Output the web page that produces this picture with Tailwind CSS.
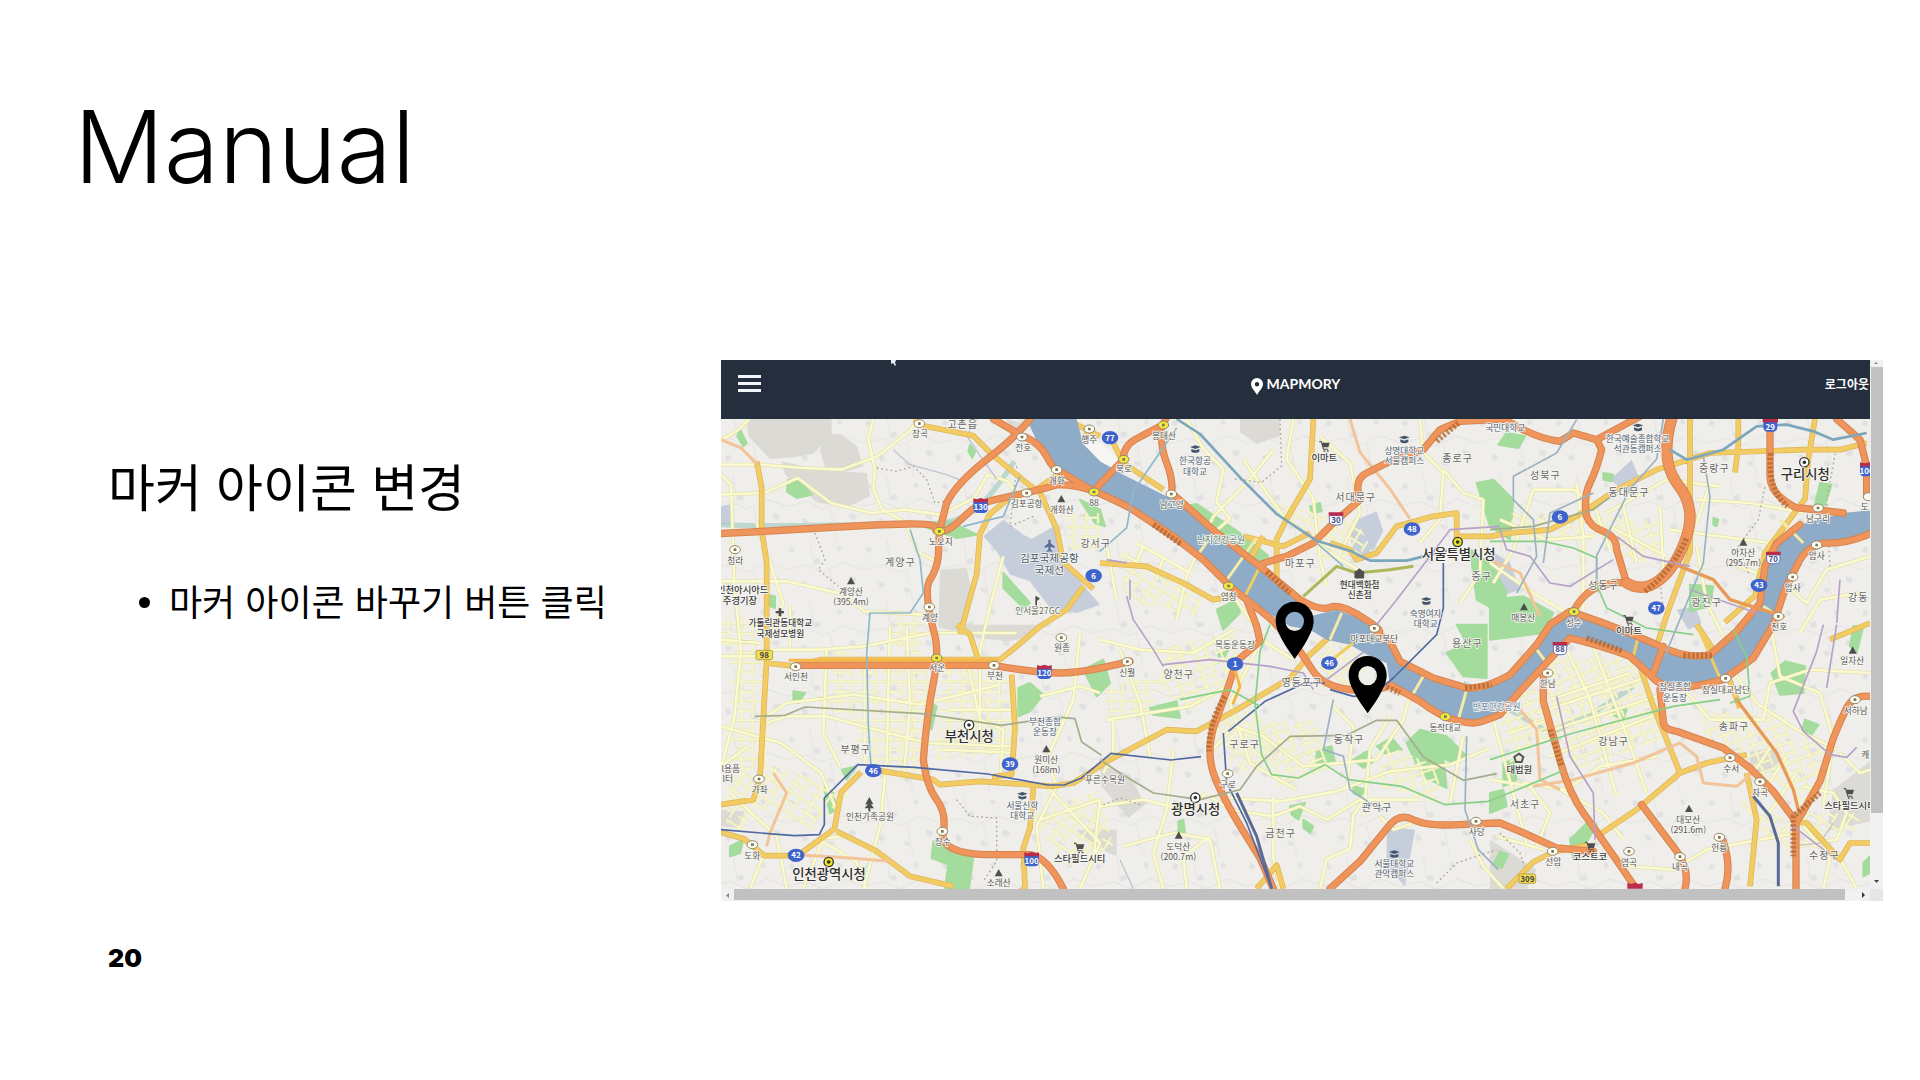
<!DOCTYPE html>
<html lang="ko">
<head>
<meta charset="utf-8">
<meta name="viewport" content="width=device-width, initial-scale=1">
<title>Manual</title>
<script src="https://cdn.jsdelivr.net/npm/@tailwindcss/browser@4"></script>
</head>
<body class="bg-white text-black">
<main class="flex min-h-screen flex-col">
  <h1 class="px-[74px] pt-[83px] font-['Inter',sans-serif] text-[100px] leading-[128px] font-light">Manual</h1>

  <div class="mt-[149px] flex items-start">
    <section class="w-[721px] max-w-[38%] shrink-0 pt-[87px] pl-[108px] font-['Noto_Sans_CJK_KR',sans-serif]">
      <h2 class="text-[51px] leading-[76px] font-normal whitespace-nowrap">마커 아이콘 변경</h2>
      <ul class="mt-[49px] ml-[31px] text-[36px] leading-[56px]">
        <li class="flex items-center gap-[19px] whitespace-nowrap"><span class="mt-[4px] size-[11px] rounded-full bg-black"></span>마커 아이콘 바꾸기 버튼 클릭</li>
      </ul>
    </section>

    <section class="mr-[37px] grid min-w-0 flex-1 grid-cols-[1fr_13px]">
      <div class="relative min-w-0">
        <header class="grid h-[59px] grid-cols-3 items-start bg-[#242e3c] text-white">
          <button type="button" aria-label="메뉴" class="mt-[15px] ml-[17px] flex w-[23px] flex-col gap-[4px]">
            <span class="h-[3px] w-full bg-[#f1f5fa]"></span><span class="h-[3px] w-full bg-[#f1f5fa]"></span><span class="h-[3px] w-full bg-[#f1f5fa]"></span>
          </button>
          <a href="#" class="mt-[13px] flex items-center justify-center gap-[4px] font-['Lato',sans-serif] text-[14px] leading-[22px] font-bold">
            <svg class="mt-[5px] h-[17px] w-[12px]" viewBox="0 0 24 34" fill="currentColor" aria-hidden="true"><path fill-rule="evenodd" d="M12 0a12 12 0 0 0-12 12c0 8 8 14 12 22 4-8 12-14 12-22A12 12 0 0 0 12 0Zm0 8a4.500 4.500 0 1 1 0 9 4.500 4.500 0 0 1 0-9Z"/></svg>MAPMORY</a>
          <button type="button" class="mt-[14px] mr-px justify-self-end font-['Noto_Sans_CJK_KR',sans-serif] text-[12px] leading-[20px] font-bold">로그아웃</button>
        </header>
        <svg class="absolute top-0 left-[170px] h-[6px] w-[6px]" viewBox="0 0 6 6" aria-hidden="true"><path d="M0 0h5L4 3l1 2-1 1-2-3-2 1z" fill="#e9edf2"/></svg>

        <svg class="block w-full bg-[#efeeea] font-['Noto_Sans_CJK_KR',sans-serif]" viewBox="33 208 3447 1409" role="img" aria-label="서울 지도">
          <defs>
            <pattern id="specks" width="230" height="190" patternUnits="userSpaceOnUse">
              <path d="M12 20l14 8-8 12-12-6zM80 60l18-6 4 16-16 4zM150 22l10-4 8 12-12 6zM190 110l20 6-6 16-18-8zM44 130l12-6 10 14-14 8zM120 150l8-8 14 10-10 10z" fill="#d5d7dc" opacity=".55"/>
              <path d="M0 90l60-14 50 22 60-30 60 22M70 0l12 76M150 190l-20-95" fill="none" stroke="#e4e3e1" stroke-width="3"/>
            </pattern>
            <pattern id="streets" width="74" height="58" patternUnits="userSpaceOnUse">
              <path d="M0 10h74M0 40h50M20 0v58M54 10v48" fill="none" stroke="#dfdda4" stroke-width="7"/>
              <path d="M0 10h74M0 40h50M20 0v58M54 10v48" fill="none" stroke="#faf9cf" stroke-width="5"/>
            </pattern>
            <pattern id="streetsTilted" href="#streets" patternTransform="rotate(-20)"/>
            <pattern id="streetsSlanted" href="#streets" patternTransform="rotate(32)"/>
            <path id="arterials" d="M140 335l15 80 0 125 15 100 0 290-20 350-20 70-97 15M640 228l150 30 60 60 110 90 30 20 50 110 20 100 90 80M1140 238l-40 60-60 80-60 40-80 25-60 50-30 60-10 120-50 180M610 208h15M1170 260l-80-40M1210 280l30 60 120 80M170 940l90 10 70-20h540l50-40 70-60 80-50 50-70M905 975l10 160-10 140-50 5 0 15M740 825l40 30 25 75M490 1260l180 30 20 15 120-10 220 15 60-10 110-70 170-90 90 5 130-70 150-90 60-70 110-100M33 1448l70 20 60 50h100l110-80 20-110 60-60M380 1445l120 60 100 75 130 30M970 1315l-10 120-20 60 5 120-20 15M1170 640l140 10 110 50 90 50 60-10 20-60 70-120M1810 208l-10 180-70 120-30 60 0 120M1600 560l120 30 80-40M1860 580l60 20 20 30 60-20 60-80 110-30 70-10v70h100l60-10 120-10 80-40 120-80 120-60 160-50 280-10h110l80-20M3315 208l-20 120-10 120-120 160-30 130-90 80M2940 208v400l-60 160-40 120M3085 208v80l-10 80M2780 920l50 150 80 200-130 110-120 80M2910 1270l80-30 120-25M2390 1617l80-80 60-30 100-20M2960 825l40 60 60 110 30 80M3110 1270l30 140-20 200M3480 1480l-60 0-30 50-100-110-40-5M3360 870l120-50M1640 1617l60-70 20 70"/>
            <path id="expressways" d="M25 552C280 540 450 525 590 523S650 545 690 545 760 495 800 470 930 440 1040 405Q1110 405 1170 432T1260 475L1390 560 1480 630 1555 705Q1590 735 1610 750T1690 815L1770 905 1810 965Q1840 1010 1920 1020T2040 1005L2130 1055Q2190 1100 2230 1110T2290 1120 2370 1095L2430 1025 2500 950 2580 865Q2680 890 2760 920L2820 975Q2850 1012 2900 1013T3040 990L3130 925 3190 825 3225 720 3270 630Q3290 595 3340 580 3410 585 3490 548M960 208Q920 260 830 330T710 460L688 545 685 620Q680 660 660 690T670 840Q690 900 670 1000T640 1230Q650 1310 680 1350T700 1450 830 1515H960Q1010 1520 1060 1617M850 208L930 255Q990 280 1010 320T1050 365L1150 425 1240 330Q1240 290 1275 270T1360 225L1370 200M1355 228Q1350 290 1370 340T1385 430L1520 550 1650 650 1770 750Q1830 785 1860 773T1960 805 2000 850L2040 875 2070 935 2170 985 2270 1015Q2320 1020 2400 975L2480 885 2520 825 2580 785 2680 820 2770 855 2840 885Q2930 930 3000 915L3080 845 3150 760 3165 650 3200 580 3270 525M260 947H850Q980 970 1050 970T1260 935M1610 750L1640 830 1650 875 1580 935 1550 1025 1510 1135Q1490 1210 1510 1270T1600 1445L1650 1525 1690 1617M1650 645Q1690 630 1730 620L1810 580 1870 520 1950 450Q1930 390 1970 370L2030 340 2140 300 2190 240 2250 215 2380 208 2440 240Q2500 270 2550 275L2590 250 2660 270 2675 300Q2660 360 2640 400T2630 500Q2640 530 2680 545T2720 600L2750 700M2660 270L2790 200M2750 700Q2640 690 2590 785M3180 200V380Q3180 420 3220 450T3270 475L3400 490M3380 208L3450 270 3470 350V440M1860 1617L1950 1535 2040 1425Q2070 1390 2110 1410T2250 1425 2370 1420L2430 1445 2540 1495 2650 1505M2500 970V1055L2540 1195Q2570 1320 2620 1390T2770 1605M2850 1020L2860 1115Q2860 1140 2900 1145L3040 1195 3120 1255 3190 1325 3250 1405 3258 1425V1617M3480 1040Q3430 1035 3410 1075T3370 1165L3330 1295 3280 1385 3255 1425M2795 1365L2900 1505Q2940 1560 2925 1617M3040 1475Q3065 1550 3045 1617M2860 890L2830 970"/>
          </defs>

          <!-- ground: hills, airfield, campuses -->
          <path fill="url(#specks)" d="M33 208h3447v1409H33z"/>
          <g fill="#dcdad4">
            <path d="M110 208h255v45l-55 60-60 10-70 5-65-68zM345 250l50 5 45 35 20 60-50 15-65-12-15-50zM215 335l90 20 95 10 70 5 10 70-65 30-90-10-100-85zM690 660l80-5 20 90-45 100-60-10zM750 825h260l-60 40-60 10-90-10zM1590 208h120v50l-70 25-50-35zM1170 1245l90 30 45 90-50 40-80-95zM3370 1320l110-85v180l-130 30zM3120 1205l80-10 10 40-60 50-30-30zM1100 1440h120v80l-70-30zM2340 1470l140 90-30 57h-110zM890 208l70 20-60 40zM33 1380l70 5-20 50-50-5z"/>
          </g>
          <g fill="#c6cedb">
            <path d="M820 560l60-50 60 45 90 45 140 165-70 25-80-15-60-80-60-20-40-70zM960 570l80-45 20 90-70 10zM33 470l35-8v65H33zM1940 510l60-25 20 60-40 75-50-10-10-60zM2030 1430l85 10-30 170-55-60zM2700 390l65-60 25 60-40 40zM2340 600l60 40 30 80-60 20zM2900 780l55-10 20 50-40 20z"/>
            <path d="M1060 260l110 20 60 50-20 20-90-30z" fill="#f7f6f3"/>
          </g>

          <!-- parks -->
          <g fill="#a3dc9c" stroke="#a3dc9c" stroke-width="6" stroke-linejoin="round">
            <path d="M235 390l35 5 35 40-45 10-30-20zM90 240l20 40-10 10-18-30zM780 285l15 20-8 20-12-20zM1060 345l70 25 40 65-45-20zM610 520l110-5 80 40-60 10zM165 735l30 5v35l-28-10zM1110 450l60 30 15 50-30-10zM880 670l80 90-20 15-60-60zM1320 525l80-50 60-12 120 80 95 75-20 35-70-10-140-90-90-20zM2300 400l50-10 60 60-10 120-60-40zM2280 600l70 50 40 80-20 60-70-40zM2390 250l55 10-20 35-60-10zM2340 750l100-10 90 50-30 60-160 20zM2940 705l70 5-10 60-60 15zM3330 400l35 5-20 60-35 20zM2240 825h90v160l-70-5-50-70 60-30zM2090 1180l40-40 80 20 60 60-40 20-30-15 10 90-60-30-30-40zM1820 1200l45-10 10 50-55 10zM1930 1230l40-25 20 30-30 20zM2000 1190l45-25 30 35-50 10zM1320 1075l80-20 10 50-80-10zM925 1015l35-15 40 35-40 50-35 15zM1120 960l60-30 20 70-40 40zM250 1025l35 5-20 30-15-10zM670 1475l50 15 70 30-15 110-70-15 10-70-50-20zM340 1310l30 20 10 50-20 10zM395 1260l45-10-30 40zM1740 1370l45-10-20 50-20-15zM1780 1410l30 20-10 20-20-15zM1930 1310l40 10-20 20-20-10zM2580 1470l60-60 20 15-40 70-30 30zM2710 1070l40 10-10 30-35-15zM2340 1330l40-10 10 50-50 20zM2380 1240l30-10 10 60-40 20zM3185 970l40-35 60 15-5 80-70 5zM3285 1110l40 15-20 30-30-10zM3430 830h30l-20 80-20-20zM60 1490l40-20-10 40-30 10zM1405 1415l15-5 5 40-20 10zM660 1060l20 10-15 70-10-20zM2350 1545l20-40 25 10-20 40zM3460 1540l20-20v50l-20 10zM1530 900l30-10-15 30-20 0zM1520 780l60-30 10 40-50 50zM2680 370l30 5-5 20-25-5zM3010 505l15 5-5 20-10-5zM1800 470l30-10 5 25-30 5z"/>
          </g>
          <path d="M33 525c200 10 380-5 550 0s220-20 330-190M2260 1000l260 150 130-60 120-80" fill="none" stroke="#abcfc3" stroke-width="16" opacity=".7"/>

          <!-- dense street grids -->
          <path fill="url(#streets)" d="M350 900l320 40-30 330-180-30-40-140-80-20zM700 940l220 60v210l-240 20zM60 890h110v370H60zM33 800h120v90H33zM555 770l90 30-10 120-90-30zM1180 1010l180-30-40 100-120 40zM1060 490h110v110h-90z"/>
          <path fill="url(#streetsTilted)" d="M1370 890l200-40 40 130-180 110-80-90zM2500 930l260-10 90 250-250 90-60-110zM1650 1120l170-10 40 150-160 50zM2350 1040l120-40 60 170-130 70zM2980 1080l250 20 60 230-150-40-160-120zM2690 500l180 20-40 130-130-40zM3240 1180l100-30-10 160-60 60zM2020 1180l180 80-20 100-180-50z"/>
          <path fill="url(#streetsSlanted)" d="M1230 590l250 140-20 70-220-50zM180 1240l240 90-100 110-220-80zM1690 460l250 50 50 100-140 20zM3080 1340l150 70 20 100-90-40zM1500 1100l140-20 70 150-130 40zM50 1260h80l-20 180H50zM960 1400l210-80 40 170-140 60zM3260 1390h200l-30 60h-150zM2400 490l300 10-10 60-280 10zM1810 870l100 20 60 60-60 60-80-40z"/>

          <!-- minor roads -->
          <g fill="none" stroke-linejoin="round">
            <g stroke="#dddca2" stroke-width="11">
              <path id="lanes" d="M33 270q50-20 85-62M33 345h120l130 10 110 5 110-40 100-80 20-32M33 435l130-5 100-45 100 75 120 30 100-10 110 15 100-50 40-70 60 20 40 60M490 208l-15 60 20 90-5 60 25 60 70 40 40 90 60 30M33 375l30 30 10 300 20 200-20 200-40 150M33 695h200l170 40 60 50 180 10M140 520l80 240-50 140 160 0 130-10 200-40 260 0M170 1100l60-40 200-25 200 30 240-60M33 1130l180 50 120 90 50 120M350 900l-10 250 50 100M540 830l-10 400-20 200-50 190M590 830l10 240-20 220M880 620l-40 150-30 130 0 280M770 930l40 180 70 30-10 160M170 1120l60-20 120 0 110 30 190 50 250 10M720 1080h200M700 1200l220 10M990 1040l120-30 60 20M1110 850l-20 200-80 180 30 80-60 120 20 187M1000 1300l170 180-60 137M990 1410l180-60-20 180M1170 870l120 30 160 10 120-70M1190 1110l250-40 110-60M1210 1110v100l-30 60M1230 900l60 160 30 160M1430 208l50 90 60 60-20 100 40 50-60 50-100-60-70-40M1690 300l-80 100-100 100-80 180-30 130M1750 208l-20 120 80 120 20 180 20 80M1600 330l120 170 140 110 100 60M1830 260l90 80 30 150-60 120M2130 208l10 100 60 60-10 140-60 70M2200 360l60 70 60 20-10 220-60 90M1690 780l120 30 100-40 80 50M1570 740l100 140 80 50M1640 900l-80 160 60 180 140 80M1500 1210l70-80 90 30 120 90 220-20 80-120 30-110M1560 1345l150 10 170-30 160-60 180-20 120-50M1690 1345v180l20 92M1500 1340l60 40 130 20 80-30 80 40 100-60 180 0M1170 1370l130-20 120 30 70-50M1240 1490l150-40 110 20 30 147M1390 1200l-20 180-40 130 30 107M1500 1460l-80 60 10 97M1830 1617l20-90 70-30 10-100 40-60M2010 1400l40 40 60-20M2280 1470l40 80 60 67M2350 700l60-100 60-180 120 0 60 40 50 140M2690 490l180-100 160 20M2700 530l170 90M2740 470l40 170M2850 470l10 190M2960 450l160 10 160 30M3000 400l-40 120M2960 590l30 170 60 120M2600 400l20 160 0 220M2570 900l70 150 80 290M2650 890l90 240 70 200M2520 1050l240-80M2480 1090l340-110M2500 1150l340-110M2520 1220l330-130M2400 1150l120-40M2350 1110l100 370M2550 1320l130 70 60 80M2440 1300l130 20 100-70 170-30M2680 1490l80 60 130 10 100-60 160-30 110-20M2900 990l100 120 160 0 20-110 120-40 180 10M3080 980l60 80 120 80 120 60M3180 820l30 160 120 50 40 140-30 200M3060 640l160 60 70 60 60-100 130-40M3270 850l60-100 120-20M3280 1310l90 20 40 60-30 80-120 20M3260 1400l100 130-20 87M3440 1617l-60-110-100-30M3390 1210l60 60 30-10M2340 1290l120 20 60 80-40 100M2360 1460l140 40M1910 1320l20-190-60-60M1960 1400l20-200 60-100M2220 1360l40-200M3110 1300l80-120M3150 1340l80-120M3170 1400l90-130M2880 540l300 40M2370 510l140 60 140-10M2340 640l130 90 100 60M1250 620l150 80M1280 580l160 90M1190 590l30 160M1300 590l-30 70M1360 620l-20 70M33 870l120 10M33 920h130M240 770v120M33 1250l80-60M60 1330l140 130 30 157M120 1617l40-100M280 1617l60-150 80-10M470 1617l-30-80-100-60"/>
            </g>
            <use href="#lanes" stroke="#faf9cf" stroke-width="8"/>

            <!-- boundaries -->
            <path d="M500 355l60 10 50-15 40 40 25 70 50-10M315 550l30 80-20 30 60 50M740 1350l40 50 80 5 0 130-40 60M3360 650l-10-200 30-160M3115 670l-30-80 60-80 20-100M2850 700l10 80M1710 208l5 140-60 50-80-10M1180 1365l50-20 60 20M2180 1600l60-60 120-40M2370 1450l60 60 20 60M920 350l-20 180 70-30M3170 830l-20 50" stroke="#a9a29c" stroke-width="4" stroke-dasharray="5 9"/>
            <path d="M550 300l50 45 110 30 50 20M800 208l-30 50 40 60 50 70M1230 1530l40 87M3240 1490l90-10 40-60" stroke="#c3c2d4" stroke-width="4"/>
          </g>

          <!-- main roads -->
          <g fill="none" stroke-linejoin="round">
            <use href="#arterials" stroke="#dcb35a" stroke-width="17"/>
            <use href="#arterials" stroke="#f2cb63" stroke-width="13"/>
            <path stroke="#f3c39a" stroke-width="9" d="M33 270l60 25 50 50M190 1270l40 60-50 120-10 40M260 1515l160 10 120 10M1920 208l30 100 90 110 60 90M2340 630l90 40 60 130M2470 1310l120-20 180-50 140-60 50 40 20 80 100 10 60-50M2430 1080l50 60 10 150 60 30M2560 900l30-60 50 10"/>
          </g>

          <!-- Han river -->
          <path fill="#8eabc7" d="M950 208H1100L1120 283 1170 335 1240 375 1390 450 1480 520 1650 650 1770 760 1800 800 1880 780 1960 810 2000 850 2050 890 2075 940 2170 990 2310 1025 2400 975 2480 885 2520 825 2580 785 2680 820 2770 855 2840 885 2940 925 3000 915 3080 845 3150 760 3165 650 3200 580 3270 525 3400 490 3480 482V550L3400 575 3340 580 3300 590 3260 640 3225 720 3190 825 3130 925 3040 990 2900 1013 2820 975 2760 920 2580 865 2500 950 2430 1025 2370 1095 2290 1120 2230 1105 2130 1055 2040 1005 2030 940 1980 920 1920 885 1850 870 1800 840 1740 830 1610 750 1480 630 1390 560 1260 475 1170 432 1100 395 1040 355 985 285Z"/>
          <g fill="none" stroke="#f4e9a6" stroke-width="9">
            <path d="M1510 550l-50 70M1640 565l-100 140M1895 790l-35 80M2140 980l-35 60M2270 1020l-25 90M3210 510l70 70M3160 770l60 40M2480 900l30 40"/>
            <path stroke="#f0cd63" d="M1650 650l-45 90M1930 880l-90 70M2960 825l70 160M2785 860l-15 60"/>
          </g>

          <!-- expressways -->
          <g fill="none" stroke-linejoin="round" stroke-linecap="round">
            <use href="#expressways" stroke="#d68450" stroke-width="22"/>
            <use href="#expressways" stroke="#ef945a" stroke-width="16"/>
            <path stroke="#d68450" stroke-width="34" d="M2750 700Q2800 730 2850 690T2930 560 2900 400Q2850 330 2885 208"/>
            <path stroke="#ef945a" stroke-width="28" d="M2750 700Q2800 730 2850 690T2930 560 2900 400Q2850 330 2885 208"/>
            <path stroke="#e79a58" stroke-width="10" d="M3080 1050L3200 1210 3250 1320 3270 1400M2910 650L3010 690 3060 750 3220 800"/>
            <path stroke="#f6b64b" stroke-width="9" d="M240 932H860M1575 960L1590 1010 1570 1060"/>
          </g>

          <!-- expressway lettering bands -->
          <g fill="none" stroke="#b0662f" stroke-width="17" stroke-dasharray="8 5" opacity=".75">
            <path d="M1330 525l85 60M1670 665l70 65M1545 1040q-50 80-48 165M2180 275l65-55M2630 865l105 38M2920 918h90M2265 1015l80-10M2805 725q80-60 125-160M3182 310q-10 110 50 160M2520 1140l35 110M3330 1330l-80 70v120M2030 1012l40 18"/>
          </g>

          <!-- subway and rail -->
          <g fill="none" stroke-width="5" stroke-linejoin="round">
            <path stroke="#7ba6bb" stroke-width="8" d="M1400 208l70 45 120 130 110 110 120 80 100 30 60 30h110l120-30M2880 300l50 30 110-30 100-70 90-5 80 20 60 25 100-20"/>
            <path stroke="#8fb9ca" d="M600 540l30 90 10 100-40 60-120 0-10 120 5 220 10 150M760 530l120-30 50-120M1400 235l-130 190-20 110-80 70M1820 580l80 70"/>
            <path stroke="#5069a3" d="M33 1440l120 10 100 8 75-3 15-30 0-80 100-100 170 8 220 20 180 33 50 0 50-20 90-75 180 20 90-10M1860 1020l70 20 60-5 60-50 130-130 20-80V640M1540 1150l10 150 60 120 75 197M1555 1145l110-90 120-55 60 0"/>
            <path stroke="#5a6997" stroke-width="9" d="M1580 1330l60 130 45 157M3130 1340l50 60 25 80v130"/>
            <path stroke="#a3ad8c" d="M135 1100l90-3 60-25 350 20 240 35 100-15 60-10 60 5 20 70 60 40M1170 1230l60 40 100 60 140 20 120-30 50-70 100-90 170-3 90-45 60 0 80 110 120 70 100-20M2340 540l130-10 180-50 80-60"/>
            <path stroke="#86d085" d="M1680 825l-30 80-15 160 20 150 30 60 80 10 80-40 70 45 160 20 130 55 130-10 100-40 120-50M2340 1230l250-80 300-80 140-20M1410 1050l150-30 90 50M2340 575l160 0 90 20 70 30 0 80 30 70 120 60 140 20M3070 840l40 80 10 120-60 20"/>
            <path stroke="#b7a1c9" d="M1250 740l20 70 60 90 30 50M1360 945l140-15 180 20 100 20 30 50M1850 990l120-90M1980 850l80-100 100-130 60-80 150-10M2370 540l20 60 70 20 60 80 60 10 130-80M2720 560l80 60 140 30M2940 720l200 70M3340 825l-20 80-70 180 30 60 80 70 50 8 30-30M3380 825l-30 190M2540 1040l40 180 70 110 5 140M3250 1430l130 100M3390 690l-10 130M1260 690v60M1190 630l60 10"/>
            <path stroke="#9cb1c1" d="M2270 1160l-5 220 40 120 60 60M1870 1050l-30 150 60 20 20 100 60 40 40 20M2600 210l-60 100-130 70 0 70 60 60 10 110-60 110M2860 208l-20 120-80 90-100 200 0 80M2650 430l-130 60-20 150M2980 320l20 120-20 200-120 290"/>
            <path stroke="#abb85a" stroke-width="9" d="M1780 740l100-90 60 20 100-10 70-10"/>
          </g>

          <!-- interchanges -->
          <g stroke="#8e8870" stroke-width="3">
            <g fill="#fffdee">
              <ellipse cx="628" cy="222" rx="16" ry="12"/><ellipse cx="936" cy="262" rx="16" ry="12"/><ellipse cx="1040" cy="360" rx="16" ry="12"/><ellipse cx="950" cy="430" rx="16" ry="12"/><ellipse cx="1138" cy="238" rx="16" ry="12"/><ellipse cx="75" cy="600" rx="16" ry="12"/><ellipse cx="658" cy="772" rx="16" ry="12"/><ellipse cx="1384" cy="433" rx="16" ry="12"/><ellipse cx="257" cy="951" rx="16" ry="12"/><ellipse cx="852" cy="947" rx="16" ry="12"/><ellipse cx="1054" cy="864" rx="16" ry="12"/><ellipse cx="147" cy="1288" rx="16" ry="12"/><ellipse cx="127" cy="1485" rx="16" ry="12"/><ellipse cx="697" cy="1445" rx="16" ry="12"/><ellipse cx="1252" cy="936" rx="16" ry="12"/><ellipse cx="1553" cy="1272" rx="16" ry="12"/><ellipse cx="1993" cy="836" rx="16" ry="12"/><ellipse cx="2298" cy="1415" rx="16" ry="12"/><ellipse cx="3324" cy="475" rx="16" ry="12"/><ellipse cx="3320" cy="586" rx="16" ry="12"/><ellipse cx="3248" cy="682" rx="16" ry="12"/><ellipse cx="3205" cy="800" rx="16" ry="12"/><ellipse cx="3476" cy="441" rx="16" ry="12"/><ellipse cx="3047" cy="986" rx="16" ry="12"/><ellipse cx="2513" cy="970" rx="16" ry="12"/><ellipse cx="3060" cy="1224" rx="16" ry="12"/><ellipse cx="3150" cy="1296" rx="16" ry="12"/><ellipse cx="3435" cy="1050" rx="16" ry="12"/><ellipse cx="2528" cy="1505" rx="16" ry="12"/><ellipse cx="2757" cy="1505" rx="16" ry="12"/><ellipse cx="2910" cy="1521" rx="16" ry="12"/><ellipse cx="3028" cy="1463" rx="16" ry="12"/>
            </g>
            <g fill="#f1e63a">
              <ellipse cx="688" cy="545" rx="16" ry="12"/><ellipse cx="1152" cy="427" rx="16" ry="12"/><ellipse cx="1360" cy="226" rx="16" ry="12"/><ellipse cx="1241" cy="329" rx="16" ry="12"/><ellipse cx="680" cy="925" rx="16" ry="12"/><ellipse cx="1556" cy="709" rx="16" ry="12"/><ellipse cx="2206" cy="1101" rx="16" ry="12"/><ellipse cx="2592" cy="786" rx="16" ry="12"/>
            </g>
            <path stroke="#7d7560" stroke-width="8" d="M624 222h8M932 262h8M1036 360h8M946 430h8M1134 238h8M71 600h8M654 772h8M1380 433h8M253 951h8M848 947h8M1050 864h8M143 1288h8M123 1485h8M693 1445h8M1248 936h8M1549 1272h8M1989 836h8M2294 1415h8M3320 475h8M3316 586h8M3244 682h8M3201 800h8M3043 986h8M2509 970h8M3056 1224h8M3146 1296h8M3431 1050h8M2524 1505h8M2753 1505h8M2906 1521h8M3024 1463h8M684 545h8M1148 427h8M1356 226h8M1237 329h8M676 925h8M1552 709h8M2202 1101h8M2588 786h8"/>
          </g>

          <!-- city halls -->
          <g stroke="#333" stroke-width="4">
            <circle cx="777" cy="1126" r="14" fill="#fff"/><circle cx="1456" cy="1344" r="14" fill="#fff"/><circle cx="3283" cy="338" r="14" fill="#fff"/><circle cx="2243" cy="577" r="14" fill="#ece12a"/><circle cx="356" cy="1537" r="14" fill="#ece12a"/>
            <path d="M777 1126h.1M1456 1344h.1M3283 338h.1M2243 577h.1M356 1537h.1" stroke-width="11" stroke-linecap="round"/>
          </g>

          <!-- place symbols -->
          <g fill="#4f4f4f">
            <path d="M411 704h24l-12-22zM1042 458h24l-12-22zM997 1208h24l-12-22zM854 1580h24l-12-22zM1394 1467h24l-12-22zM3088 588h24l-12-22zM2430 782h24l-12-22zM2925 1387h24l-12-22zM3416 912h24l-12-22z"/>
            <path d="M206 776h8v8h8v7h-8v9h-8v-9h-9v-7h9zM478 1342l12 22h-7l9 12h-11v10h-6v-10h-11l9-12h-7zM976 740h4l10 7-9 6v15h-5z"/>
            <path d="M1015 572q4-5 7 0v9l12 9v5l-12-4v9l5 4v3l-9-2-8 2v-3l5-4v-9l-11 4v-5l11-9z" fill="#5b6d96"/>
            <path id="cart" d="M1828 274h6l3 5h22l-4 14h-15l2 4h12v3h-15l-6-22h-5zM1841 302h5v4h-5zM1851 302h5v4h-5z"/>
            <use href="#cart" x="912" y="522"/><use href="#cart" x="797" y="1202"/><use href="#cart" x="1573" y="1041"/><use href="#cart" x="-736" y="1205"/>
            <path d="M1935 665h26v20h-26zM1940 665q8-14 16 0" stroke="#4f4f4f" stroke-width="3"/>
            <path d="M2427 1212l13 10-5 15h-17l-5-15z" fill="none" stroke="#555" stroke-width="6"/>
            <g fill="#43556b">
              <path id="school" d="M1440 292l16-5 16 5-16 6zM1444 298l12 4 12-4v8q-12 7-24 0z"/>
              <use href="#school" x="627" y="-29"/><use href="#school" x="1328" y="-65"/><use href="#school" x="-519" y="1040"/><use href="#school" x="693" y="456"/><use href="#school" x="597" y="1215"/>
            </g>
          </g>

          <!-- labels -->
          <g text-anchor="middle" stroke="#f7f6f2" stroke-width="5" stroke-linejoin="round" style="paint-order:stroke">
            <g class="text-[30px] tracking-widest" fill="#666">
              <text x="758" y="236">고촌읍</text><text x="571" y="650">계양구</text><text x="1157" y="591">강서구</text><text x="2243" y="337">종로구</text><text x="1937" y="453">서대문구</text><text x="1771" y="651">마포구</text><text x="2315" y="691">중구</text><text x="2506" y="387">성북구</text><text x="2757" y="438">동대문구</text><text x="3013" y="366">중랑구</text><text x="2681" y="719">성동구</text><text x="2990" y="768">광진구</text><text x="3445" y="754">강동</text><text x="437" y="1211">부평구</text><text x="1406" y="985">양천구</text><text x="1776" y="1008">영등포구</text><text x="1604" y="1194">구로구</text><text x="1917" y="1180">동작구</text><text x="2272" y="892">용산구</text><text x="2001" y="1385">관악구</text><text x="1712" y="1461">금천구</text><text x="2445" y="1375">서초구</text><text x="2711" y="1186">강남구</text><text x="3072" y="1140">송파구</text><text x="3343" y="1529">수정구</text>
            </g>
            <g class="text-[26px]" fill="#555">
              <text x="630" y="263">장곡</text><text x="940" y="304">전호</text><text x="1040" y="402">개화</text><text x="950" y="471">김포공항</text><text x="1138" y="281">행주</text><text x="1152" y="468">88</text><text x="692" y="587">노오지</text><text x="76" y="643">청라</text><text x="660" y="815">계양</text><text x="1055" y="489">개화산</text><text x="423" y="736">계양산</text><text x="423" y="766">(395.4m)</text><text x="1362" y="268">봉대산</text><text x="1242" y="367">북로</text><text x="1385" y="475">남고양</text><text x="1556" y="751">염창</text><text x="1533" y="581" fill="#507b70">난지한강공원</text><text x="983" y="793" fill="#607060">인서울27GC</text><text x="258" y="992">서인천</text><text x="682" y="964">서운</text><text x="855" y="988">부천</text><text x="1056" y="905">원종</text><text x="149" y="1330">가좌</text><text x="127" y="1527">도화</text><text x="698" y="1487">장수</text><text x="1009" y="1240">원미산</text><text x="1009" y="1270">(168m)</text><text x="866" y="1610">소래산</text><text x="480" y="1410">인천가족공원</text><text x="1185" y="1300">푸른수목원</text><text x="62" y="1268">l용품</text><text x="53" y="1298">l터</text><text x="1252" y="978">신월</text><text x="1575" y="896">목동운동장</text><text x="1554" y="1315">구로</text><text x="1405" y="1500">도덕산</text><text x="1405" y="1530">(200.7m)</text><text x="1993" y="878">마포대교북단</text><text x="2206" y="1144">동작대교</text><text x="2300" y="1457">사당</text><text x="2360" y="1080" fill="#5a7898">반포한강공원</text><text x="2592" y="830">성수</text><text x="2440" y="815">매봉산</text><text x="3100" y="620">아차산</text><text x="3100" y="650">(295.7m)</text><text x="3324" y="517">남구리</text><text x="3320" y="629">암사</text><text x="3248" y="724">암사</text><text x="3208" y="840">천호</text><text x="3464" y="482">도</text><text x="3427" y="943">일자산</text><text x="3437" y="1093">서하남</text><text x="3048" y="1030">잠실대교남단</text><text x="2513" y="1012">한남</text><text x="3064" y="1267">수서</text><text x="3150" y="1340">자곡</text><text x="3028" y="1505">헌릉</text><text x="2910" y="1562">내곡</text><text x="2757" y="1548">염곡</text><text x="2530" y="1546">선암</text><text x="2935" y="1419">대모산</text><text x="2935" y="1449">(291.6m)</text><text x="3466" y="1224">캐</text>
            </g>
            <g class="text-[26px]" fill="#4d5a70">
              <text x="1018" y="638" class="text-[32px]">김포국제공항</text><text x="1018" y="674" class="text-[32px]">국제선</text><text x="1455" y="344">한국항공</text><text x="1455" y="375">대학교</text><text x="2083" y="314">상명대학교</text><text x="2083" y="344">서울캠퍼스</text><text x="2386" y="243">국민대학교</text><text x="2783" y="278">한국예술종합학교</text><text x="2783" y="308">석관동캠퍼스</text><text x="2147" y="802">숙명여자</text><text x="2147" y="832">대학교</text><text x="937" y="1377">서울신학</text><text x="937" y="1407">대학교</text><text x="2053" y="1553">서울대학교</text><text x="2053" y="1583">관악캠퍼스</text><text x="1005" y="1125">부천종합</text><text x="1005" y="1155">운동장</text><text x="2895" y="1022">잠실종합</text><text x="2895" y="1053">운동장</text>
            </g>
            <g class="text-[28px] font-medium" fill="#3c3c3c">
              <text x="98" y="730">인천아시아드</text><text x="90" y="762">주경기장</text><text x="211" y="830" class="text-[26px]">가톨릭관동대학교</text><text x="211" y="861" class="text-[26px]">국제성모병원</text><text x="1843" y="333">이마트</text><text x="1949" y="716" class="text-[26px]">현대백화점</text><text x="1949" y="746" class="text-[26px]">신촌점</text><text x="2757" y="854">이마트</text><text x="2428" y="1270">대법원</text><text x="2640" y="1531">코스트코</text><text x="1109" y="1537">스타필드시티</text><text x="3420" y="1377">스타필드시티</text>
            </g>
            <g class="text-[40px] font-medium" fill="#2f2f2f">
              <text x="2246" y="628">서울특별시청</text><text x="3286" y="387">구리시청</text><text x="778" y="1174">부천시청</text><text x="357" y="1589">인천광역시청</text><text x="1457" y="1392">광명시청</text>
            </g>
          </g>

          <!-- route shields -->
          <g fill="#3f63cc">
            <ellipse cx="1200" cy="264" rx="25" ry="20"/><ellipse cx="1151" cy="678" rx="25" ry="20"/><ellipse cx="2106" cy="538" rx="25" ry="20"/><ellipse cx="2550" cy="502" rx="25" ry="20"/><ellipse cx="2839" cy="775" rx="25" ry="20"/><ellipse cx="3147" cy="707" rx="25" ry="20"/><ellipse cx="1858" cy="940" rx="25" ry="20"/><ellipse cx="1575" cy="943" rx="25" ry="20"/><ellipse cx="490" cy="1263" rx="25" ry="20"/><ellipse cx="900" cy="1243" rx="25" ry="20"/><ellipse cx="258" cy="1517" rx="25" ry="20"/>
            <path d="M790 456h44v20q0 14-14 14h-16q-14 0-14-14zM981 956h44v18q0 14-14 14h-16q-14 0-14-14zM943 1518h44v18q0 14-14 14h-16q-14 0-14-14zM3160 215h42v17q0 14-14 14h-14q-14 0-14-14zM3450 348h30v32h-16q-14 0-14-14z"/>
          </g>
          <g fill="#fff" stroke="#6477ba" stroke-width="3">
            <path d="M1858 498h40v14q0 14-14 14h-12q-14 0-14-14zM2530 887h40v14q0 14-14 14h-12q-14 0-14-14zM3170 616h40v12q0 14-14 14h-12q-14 0-14-14z"/>
          </g>
          <path fill="#b92c4c" d="M790 446l10 3 12-4 12 4 10-3v12h-44zM981 946l10 3 12-4 12 4 10-3v12h-44zM943 1508l10 3 12-4 12 4 10-3v12h-44zM3158 208h46v10h-46zM3450 338l14 3 16-3v12h-30zM1856 488h44v10h-44zM2528 877h44v10h-44zM3168 606h44v10h-44zM2752 1600l12 3 11-4 11 4 12-3v17h-46z"/>
          <g fill="#f3dd55" stroke="#99852f" stroke-width="2"><rect x="138" y="902" width="50" height="28" rx="5"/><rect x="2427" y="1573" width="50" height="28" rx="5"/></g>
          <g class="text-[24px] font-bold" text-anchor="middle" fill="#fff">
            <text x="1200" y="273">77</text><text x="1151" y="687">6</text><text x="2106" y="547">48</text><text x="2550" y="511">6</text><text x="2839" y="784">47</text><text x="3147" y="716">43</text><text x="1858" y="949">46</text><text x="1575" y="952">1</text><text x="490" y="1272">46</text><text x="900" y="1252">39</text><text x="258" y="1526">42</text><text x="812" y="480">130</text><text x="1003" y="980">120</text><text x="965" y="1542">100</text><text x="3181" y="240">29</text><text x="3470" y="374">100</text>
            <g fill="#3c4a86"><text x="1878" y="519">30</text><text x="2550" y="908">88</text><text x="3190" y="636">70</text></g>
            <g fill="#444"><text x="163" y="925">98</text><text x="2452" y="1596">309</text></g>
          </g>

          <!-- placed markers -->
          <g fill="#000">
            <path id="marker" fill-rule="evenodd" d="M1754 756c-32 0-57 24-57 57 0 20 9 37 18 55 12 23 26 40 39 60 13-20 27-37 39-60 9-18 18-35 18-55 0-33-25-57-57-57Zm0 30a28 29 0 1 1 0 58 28 29 0 0 1 0-58Z"/>
            <use href="#marker" x="219" y="163"/>
          </g>
        </svg>
      </div>

      <!-- vertical scroll bar -->
      <div class="flex flex-col bg-[#f1f1f1]" aria-hidden="true">
        <svg class="h-[7px] w-full" viewBox="0 0 13 7"><path d="M4 4l2-2 2 2z" fill="#888"/></svg>
        <div class="ml-px basis-[446px] bg-[#c1c1c1]"></div>
        <div class="flex-1"></div>
        <svg class="h-[13px] w-full" viewBox="0 0 13 13"><path d="M4 4h5L6.500 7z" fill="#444"/></svg>
      </div>

      <!-- horizontal scroll bar -->
      <div class="flex h-[12px] items-center bg-[#f1f1f1]" aria-hidden="true">
        <svg class="h-[12px] w-[13px]" viewBox="0 0 13 12"><path d="M8 4v5L5 6.500z" fill="#888"/></svg>
        <div class="h-[11px] flex-1 bg-[#c1c1c1]"></div>
        <svg class="h-[12px] w-[25px]" viewBox="0 0 25 12"><path d="M17 3v6l3-3z" fill="#333"/></svg>
      </div>
      <div class="bg-[#e6e6e6]"></div>
    </section>
  </div>

  <footer class="mt-[41px] pl-[108px] font-['Inter',sans-serif] text-[25px] leading-[32px] font-black">20</footer>
</main>
</body>
</html>
